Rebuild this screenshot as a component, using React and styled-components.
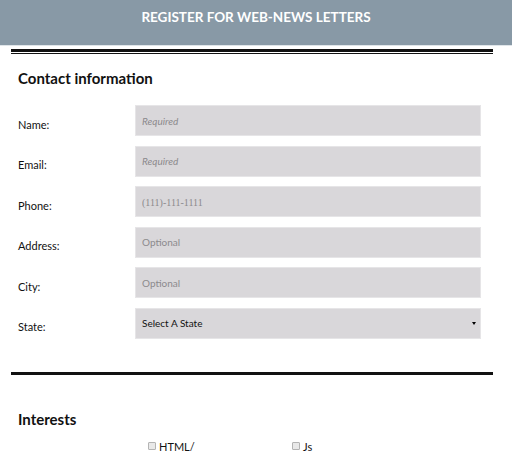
import React from 'react';
import styled, { createGlobalStyle } from 'styled-components';

const GlobalStyle = createGlobalStyle`
  body {
    margin: 0;
    background: #fff;
    font-family: 'Lato', 'Open Sans', sans-serif;
    color: #111;
  }
`;

const Header = styled.header`
  height: 46px;
  box-sizing: border-box;
  padding-top: 7px;
  background: #8899a6;
  border-bottom: 1px solid #dfe5e9;
  color: #fff;
  text-align: center;
  font-size: 13.5px;
  font-weight: 700;
  line-height: 20px;
`;

const Main = styled.main`
  margin: 0 19px 0 11px;
`;

const DoubleRule = styled.div`
  margin-top: 3px;
  height: 1px;
  border-top: 3px solid #111;
  border-bottom: 1px solid #111;
`;

const Rule = styled.div`
  margin-top: ${p => p.$top || 0}px;
  border-top: 3px solid #111;
`;

const Section = styled.section`
  padding-left: 7px;
`;

const Heading = styled.h2`
  margin: ${p => p.$top}px 0 0;
  font-size: 15px;
  font-weight: 700;
  line-height: 20px;
`;

const Form = styled.div`
  margin-top: 17px;
  display: flex;
  flex-direction: column;
  gap: 9.6px;
`;

const Row = styled.label`
  display: flex;
  align-items: center;
`;

const Label = styled.span`
  width: 117px;
  flex: none;
  padding-top: 7px;
  font-size: 11px;
`;

const Input = styled.input`
  width: 346px;
  height: 31px;
  box-sizing: border-box;
  border: 1px solid #e6e5e7;
  background: #d9d7da;
  padding: 0 6px;
  font-family: 'Lato', sans-serif;
  font-size: 10px;
  outline: none;

  &::placeholder {
    color: #8c8a8d;
    font-style: ${p => (p.$italic ? 'italic' : 'normal')};
    font-family: ${p => (p.$serif ? "'Liberation Serif', serif" : "'Lato', sans-serif")};
  }
`;

const SelectWrap = styled.div`
  position: relative;
  width: 346px;

  &::after {
    content: '';
    position: absolute;
    right: 5px;
    top: 14px;
    border-left: 2px solid transparent;
    border-right: 2px solid transparent;
    border-top: 3px solid #000;
  }
`;

const Select = styled.select`
  appearance: none;
  width: 100%;
  height: 31px;
  box-sizing: border-box;
  border: 1px solid #e6e5e7;
  border-radius: 0;
  background: #d9d7da;
  padding: 0 6px;
  font-family: 'Lato', sans-serif;
  font-size: 10px;
  color: #111;
  outline: none;
`;

const Checks = styled.div`
  display: flex;
  margin-top: 11px;
  padding-left: 130px;
`;

const Check = styled.label`
  width: 144px;
  display: flex;
  align-items: center;
  gap: 3px;
  font-size: 11px;
  line-height: 13px;
`;

const Box = styled.input`
  appearance: none;
  margin: 0;
  width: 8px;
  height: 8px;
  border: 1px solid #b4b4b4;
  border-radius: 1px;
  background: #e9e9e9;
`;

const fields = [
  { label: 'Name:', placeholder: 'Required', italic: true },
  { label: 'Email:', placeholder: 'Required', italic: true },
  { label: 'Phone:', placeholder: '(111)-111-1111', serif: true },
  { label: 'Address:', placeholder: 'Optional' },
  { label: 'City:', placeholder: 'Optional' },
];

export default function App() {
  return (
    <>
      <GlobalStyle />
      <Header>REGISTER FOR WEB-NEWS LETTERS</Header>
      <Main>
        <DoubleRule />
        <Section>
          <Heading $top={14}>Contact information</Heading>
          <Form>
            {fields.map(f => (
              <Row key={f.label}>
                <Label>{f.label}</Label>
                <Input placeholder={f.placeholder} $italic={f.italic} $serif={f.serif} />
              </Row>
            ))}
            <Row>
              <Label>State:</Label>
              <SelectWrap>
                <Select defaultValue="">
                  <option value="">Select A State</option>
                </Select>
              </SelectWrap>
            </Row>
          </Form>
        </Section>
        <Rule $top={33} />
        <Section>
          <Heading $top={34}>Interests</Heading>
          <Checks>
            <Check><Box type="checkbox" />HTML/</Check>
            <Check><Box type="checkbox" />Js</Check>
          </Checks>
        </Section>
      </Main>
    </>
  );
}
